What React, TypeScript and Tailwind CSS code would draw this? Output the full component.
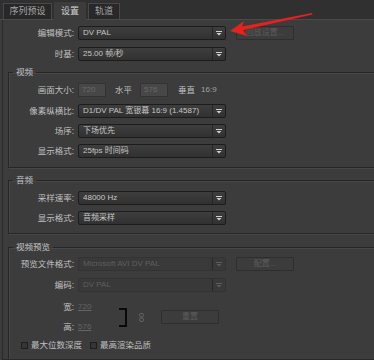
import React from "react";

const font = "font-['Liberation_Sans','Noto_Sans_CJK_SC',sans-serif]";

function Arrow({ dim }: { dim?: boolean }) {
  return (
    <span className="flex h-full w-[13px] items-center justify-center border-l border-[#262626]">
      <svg width="6" height="5" viewBox="0 0 6 5">
        <path d="M0 0.5H6" stroke={dim ? "#5c5c5c" : "#d0d0d0"} strokeWidth="1" />
        <path d="M0.5 2H5.5L3 4.5Z" fill={dim ? "#5c5c5c" : "#d0d0d0"} />
      </svg>
    </span>
  );
}

function Select({ value, disabled }: { value: string; disabled?: boolean }) {
  return (
    <div
      className={
        disabled
          ? "ml-[4px] flex h-[14px] w-[148px] items-center rounded-[2px] border border-[#333] bg-[#393939] text-[#5f5f5f]"
          : "ml-[4px] flex h-[14px] w-[148px] items-center rounded-[2px] border border-[#1c1c1c] bg-gradient-to-b from-[#3e3e3e] to-[#313131] text-[#c6c6c6]"
      }
    >
      <span className="flex-1 overflow-hidden whitespace-nowrap pl-[4px] text-[8px] leading-[12px]">{value}</span>
      <Arrow dim={disabled} />
    </div>
  );
}

function Row({ label, w, children }: { label: string; w: number; children: React.ReactNode }) {
  return (
    <div className="flex h-[14px] items-center">
      <span
        className={`${w === 71 ? "w-[71px]" : "w-[65px]"} whitespace-nowrap text-right text-[8.5px] leading-none text-[#c0c0c0]`}
      >
        {label}
      </span>
      {children}
    </div>
  );
}

function Group({ title, className, children }: { title: string; className: string; children: React.ReactNode }) {
  return (
    <fieldset
      className={`ml-[5px] mr-[-6px] min-w-0 border border-[#262626] px-0 shadow-[inset_1px_1px_0_#474747,1px_1px_0_#474747] ${className}`}
    >
      <legend className="ml-[4px] px-[3px] text-[8.5px] leading-[10px] text-[#c4c4c4]">{title}</legend>
      {children}
    </fieldset>
  );
}

function Button({ label, className }: { label: string; className: string }) {
  return (
    <div
      className={`flex h-[14px] w-[58px] items-center justify-center rounded-[1px] border border-[#2e2e2e] text-[8px] leading-none text-[#5c5c5c] ${className}`}
    >
      {label}
    </div>
  );
}

function Check({ label }: { label: string }) {
  return (
    <div className="flex items-center">
      <span className="h-[7px] w-[7px] border border-[#1e1e1e] bg-[#353535]" />
      <span className="ml-[3px] text-[8.5px] leading-none text-[#c0c0c0]">{label}</span>
    </div>
  );
}

export default function App() {
  return (
    <div className={`relative h-[360px] w-[374px] overflow-hidden bg-[#3c3c3c] ${font}`}>
      <div className="flex h-[20px] items-end gap-[2px] border-b border-[#4a4a4a] bg-[#303030] pl-[3px]">
        <div className="flex h-[16px] w-[49px] items-center justify-center border border-b-0 border-[#484848] bg-[#282828] text-[9px] leading-none text-[#a6a6a6]">
          序列预设
        </div>
        <div className="-mb-px flex h-[18px] w-[32px] items-center justify-center bg-[#3c3c3c] text-[9px] leading-none text-[#d2d2d2]">
          设置
        </div>
        <div className="flex h-[16px] w-[32px] items-center justify-center border border-b-0 border-[#484848] bg-[#282828] text-[9px] leading-none text-[#a6a6a6]">
          轨道
        </div>
      </div>

      <div className="ml-[2px] h-[340px] overflow-hidden border-l border-b border-[#2a2a2a] pt-[6px]">
        <Row label="编辑模式:" w={71}>
          <Select value="DV PAL" />
          <Button label="回放设置..." className="ml-[10px]" />
        </Row>
        <div className="mt-[7px]">
          <Row label="时基:" w={71}>
            <Select value="25.00 帧/秒" />
          </Row>
        </div>

        <Group title="视频" className="mt-[6px] pb-[9px] pt-[6px]">
          <div className="flex flex-col gap-[6px]">
            <Row label="画面大小:" w={65}>
              <span className="ml-[4px] flex h-[14px] w-[28px] items-center border border-[#333] bg-[#474747] pl-[3px] text-[8px] leading-none text-[#6a6a6a]">
                720
              </span>
              <span className="ml-[9px] text-[8.5px] leading-none text-[#c0c0c0]">水平</span>
              <span className="ml-[8px] flex h-[14px] w-[28px] items-center border border-[#333] bg-[#474747] pl-[3px] text-[8px] leading-none text-[#6a6a6a]">
                576
              </span>
              <span className="ml-[10px] text-[8.5px] leading-none text-[#c0c0c0]">垂直</span>
              <span className="ml-[6px] text-[8px] leading-none text-[#a0a0a0]">16:9</span>
            </Row>
            <div className="mt-[1px]">
              <Row label="像素纵横比:" w={65}>
                <Select value="D1/DV PAL 宽银幕 16:9 (1.4587)" />
              </Row>
            </div>
            <Row label="场序:" w={65}>
              <Select value="下场优先" />
            </Row>
            <Row label="显示格式:" w={65}>
              <Select value="25fps 时间码" />
            </Row>
          </div>
        </Group>

        <Group title="音频" className="mt-[7px] pb-[8px] pt-[6px]">
          <div className="flex flex-col gap-[6px]">
            <Row label="采样速率:" w={65}>
              <Select value="48000 Hz" />
            </Row>
            <Row label="显示格式:" w={65}>
              <Select value="音频采样" />
            </Row>
          </div>
        </Group>

        <Group title="视频预览" className="mt-[8px] pb-[7px] pt-[5px]">
          <Row label="预览文件格式:" w={65}>
            <Select value="Microsoft AVI DV PAL" disabled />
            <Button label="配置..." className="ml-[10px]" />
          </Row>
          <div className="mt-[7px]">
            <Row label="编码:" w={65}>
              <Select value="DV PAL" disabled />
            </Row>
          </div>
          <div className="mt-[8px] flex items-center">
            <div className="flex w-[100px] flex-col gap-[6px]">
              <Row label="宽:" w={65}>
                <span className="ml-[4px] text-[8px] leading-none text-[#646464] underline">720</span>
              </Row>
              <Row label="高:" w={65}>
                <span className="ml-[4px] text-[8px] leading-none text-[#646464] underline">576</span>
              </Row>
            </div>
            <svg width="10" height="19" viewBox="0 0 10 19" className="ml-[9px]">
              <path d="M1 1H8V18H1" fill="none" stroke="#0a0a0a" strokeWidth="2" />
            </svg>
            <svg width="5" height="9" viewBox="0 0 5 9" className="ml-[11px]">
              <rect x="0.5" y="0.5" width="4" height="3.5" rx="1.5" fill="none" stroke="#646464" />
              <rect x="0.5" y="5" width="4" height="3.5" rx="1.5" fill="none" stroke="#646464" />
            </svg>
            <Button label="重置" className="ml-[17px]" />
          </div>
          <div className="mt-[4px] flex h-[14px] items-center pl-[12px]">
            <Check label="最大位数深度" />
            <div className="ml-[8px]">
              <Check label="最高渲染品质" />
            </div>
          </div>
        </Group>
      </div>

      <svg className="pointer-events-none absolute left-0 top-0" width="374" height="60" viewBox="0 0 374 60">
        <path d="M230 31 L244 21 L242 26.5 L312 13 L312.5 14.5 L243 30 L247 36 Z" fill="#e8211d" />
      </svg>
    </div>
  );
}
